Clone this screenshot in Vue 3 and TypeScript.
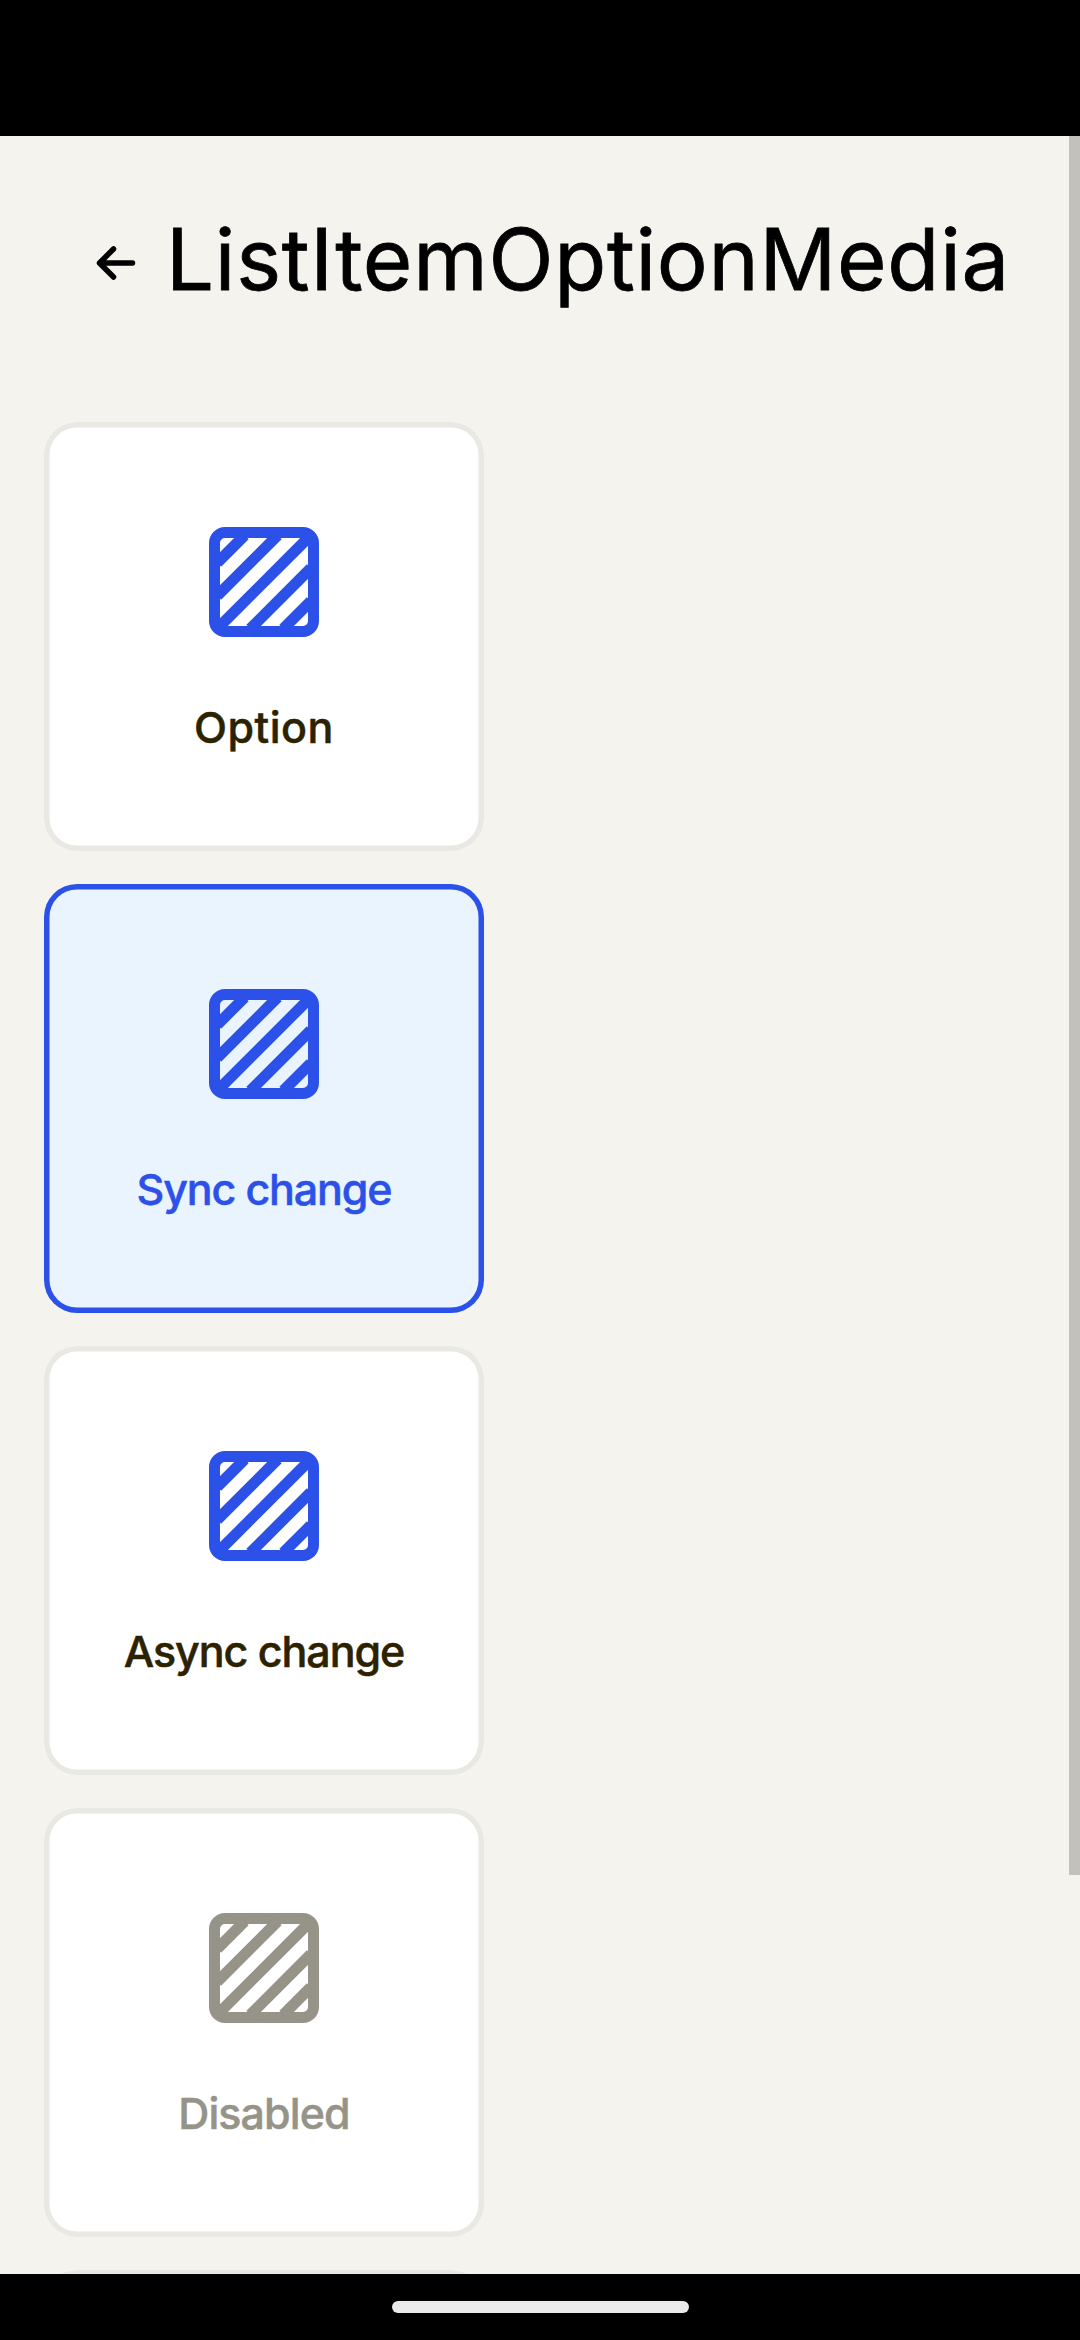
<script setup lang="ts">
interface Option {
  label: string
  state: 'default' | 'selected' | 'disabled'
  spacing: number
}

const options: Option[] = [
  { label: 'Option', state: 'default', spacing: 0.5 },
  { label: 'Sync change', state: 'selected', spacing: -1.15 },
  { label: 'Async change', state: 'default', spacing: -1.05 },
  { label: 'Disabled', state: 'disabled', spacing: -0.9 },
  { label: '', state: 'default', spacing: 0 },
]
</script>

<template>
  <div class="screen">
    <div class="status-bar"></div>
    <main class="page">
      <header class="header">
        <svg class="back" viewBox="0 0 66 66" aria-label="Back">
          <path d="M52.5 33H19.5M33.5 19L19.5 33L33.5 47" />
        </svg>
        <h1 class="title">ListItemOptionMedia</h1>
      </header>
      <div class="list">
        <div v-for="(option, i) in options" :key="i" class="card" :class="option.state">
          <svg class="media" viewBox="0 0 40 40">
            <rect x="2" y="2" width="36" height="36" rx="3.8" />
            <path d="M3 13L13 3M3 25L25 3M3 37L37 3M15 37L37 15M27 37L37 27" />
          </svg>
          <span class="label" :style="{ letterSpacing: option.spacing + 'px' }">{{ option.label }}</span>
        </div>
      </div>
      <div class="scrollbar"></div>
    </main>
    <div class="nav-bar"><div class="handle"></div></div>
  </div>
</template>

<style>
body {
  margin: 0;
  background: #000;
}
</style>

<style scoped>
.screen {
  display: flex;
  flex-direction: column;
  width: 1080px;
  height: 2340px;
  overflow: hidden;
  background: #000;
  font-family: Inter, 'Liberation Sans', sans-serif;
}
.status-bar {
  flex: none;
  height: 136px;
}
.page {
  position: relative;
  flex: none;
  box-sizing: border-box;
  height: 2138px;
  overflow: hidden;
  background: #f4f3ee;
}
.header {
  display: flex;
  align-items: center;
  box-sizing: border-box;
  height: 286px;
  padding: 0 0 32px 80px;
}
.back {
  flex: none;
  width: 66px;
  height: 66px;
  fill: none;
  stroke: #000;
  stroke-width: 5.5;
  stroke-linecap: round;
  stroke-linejoin: round;
}
.title {
  margin: 0 0 6px 20px;
  font-size: 85px;
  font-weight: 400;
  line-height: 110px;
  letter-spacing: 0.75px;
  -webkit-text-stroke: 0.8px currentColor;
  color: #000;
  white-space: nowrap;
}
.list {
  display: flex;
  flex-direction: column;
  gap: 33px;
  padding-left: 44px;
}
.card {
  display: flex;
  flex: none;
  flex-direction: column;
  align-items: center;
  box-sizing: border-box;
  width: 440px;
  height: 429px;
  padding-top: 105px;
  border-radius: 33px;
  background: #fff;
  box-shadow: inset 0 0 0 5.5px #e9e8e2;
  color: #2c2200;
}
.media {
  flex: none;
  width: 110px;
  height: 110px;
  fill: none;
  stroke: #2c51e8;
  stroke-width: 4;
}
.label {
  margin-top: 57px;
  font-size: 43px;
  font-weight: 500;
  line-height: 66px;
  -webkit-text-stroke: 0.5px currentColor;
  white-space: nowrap;
}
.selected {
  background: #eaf4ff;
  box-shadow: inset 0 0 0 5.5px #2c51e8;
  color: #2c51e8;
}
.disabled {
  color: #969389;
}
.disabled .media {
  stroke: #969389;
}
.scrollbar {
  position: absolute;
  top: 0;
  right: 0;
  width: 11px;
  height: 1739px;
  background: #c2c1bc;
}
.nav-bar {
  display: flex;
  flex: 1;
  justify-content: center;
  align-items: center;
}
.handle {
  width: 297px;
  height: 12px;
  border-radius: 6px;
  background: #ebebeb;
}
</style>
